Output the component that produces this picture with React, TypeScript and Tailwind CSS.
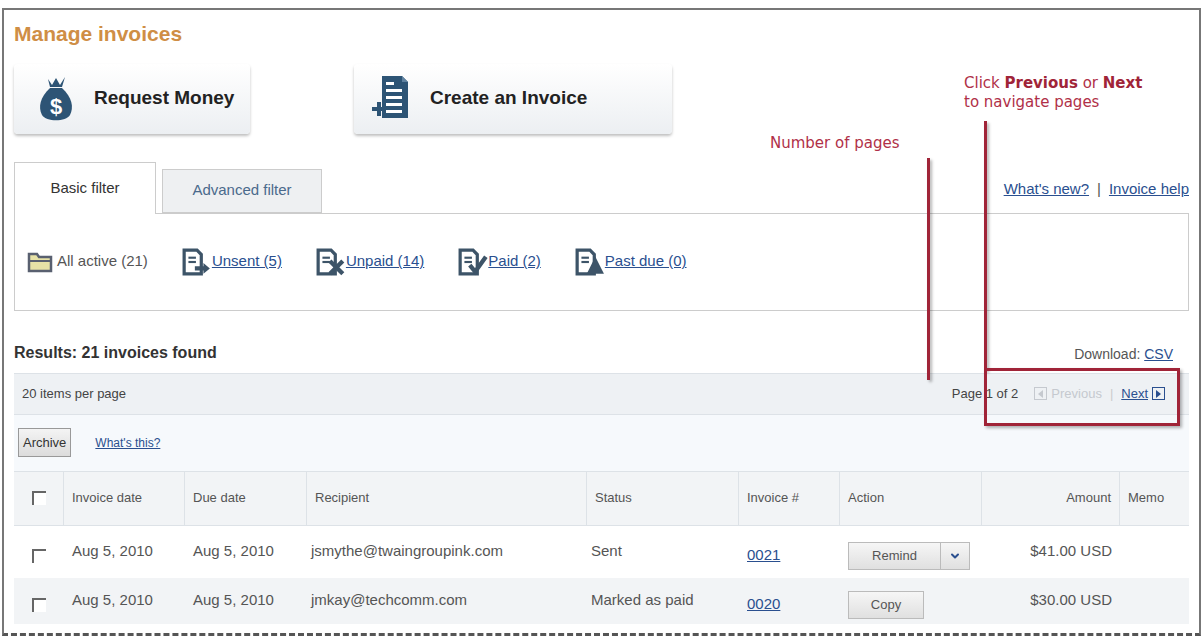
import { ChevronDown } from 'lucide-react';

const link = 'text-[#2a4f8f] underline';

function MoneyIcon() {
  return (
    <svg width="36" height="48" viewBox="0 0 36 48">
      <path d="M10 4 L14 10 L18 3 L22 10 L27 2 L24 12 L12 12 Z" fill="#2d5475" />
      <path d="M12 13 C2 22 0 32 4 40 C8 47 28 47 32 40 C36 32 34 22 24 13 Z" fill="#2d5475" />
      <text x="18" y="39" textAnchor="middle" fontSize="22" fontWeight="bold" fill="#fff" fontFamily="Liberation Sans">$</text>
    </svg>
  );
}

function InvoiceIcon() {
  return (
    <svg width="40" height="50" viewBox="0 0 40 50">
      <path d="M12 2 H32 L38 8 V44 H12 Z" fill="#2d5475" />
      <path d="M32 2 V8 H38" fill="#5f82a0" />
      <rect x="16" y="8" width="8" height="3" fill="#fff" />
      <rect x="16" y="15" width="16" height="3" fill="#fff" />
      <rect x="16" y="22" width="16" height="3" fill="#fff" />
      <rect x="16" y="29" width="16" height="3" fill="#fff" />
      <rect x="16" y="36" width="16" height="3" fill="#fff" />
      <rect x="2" y="33" width="14" height="4" fill="#2d5475" />
      <rect x="7" y="28" width="4" height="14" fill="#2d5475" />
    </svg>
  );
}

function DocIcon({ mark }: { mark: 'arrow' | 'x' | 'check' | 'warn' }) {
  return (
    <svg width="30" height="28" viewBox="0 0 28 26">
      <path d="M2 2 H14 L18 6 V24 H2 Z" fill="none" stroke="#3d5468" strokeWidth="3" />
      <rect x="6" y="8" width="7" height="2" fill="#3d5468" />
      <rect x="6" y="12" width="7" height="2" fill="#3d5468" />
      {mark === 'arrow' && <path d="M12 17 H20 V14 L26 19 L20 24 V21 H12 Z" fill="#3d5468" />}
      {mark === 'x' && <path d="M13 12 L25 24 M25 12 L13 24" stroke="#3d5468" strokeWidth="4" />}
      {mark === 'check' && <path d="M11 16 L16 22 L26 8" stroke="#3d5468" strokeWidth="4" fill="none" />}
      {mark === 'warn' && <path d="M19 8 L27 24 H11 Z" fill="#3d5468" />}
    </svg>
  );
}

function Folder() {
  return (
    <svg width="26" height="22" viewBox="0 0 26 22">
      <path d="M2 3 H10 L12 6 H24 V20 H2 Z" fill="#e7e2a6" stroke="#596070" strokeWidth="2.5" />
      <path d="M2 10 H24" stroke="#596070" strokeWidth="2" />
    </svg>
  );
}

function Tri({ dir, color }: { dir: 'l' | 'r'; color: string }) {
  return (
    <span className="inline-flex h-[13px] w-[13px] items-center justify-center border" style={{ borderColor: color }}>
      <svg width="7" height="8" viewBox="0 0 7 8">
        <path d={dir === 'r' ? 'M1 0 L6 4 L1 8 Z' : 'M6 0 L1 4 L6 8 Z'} fill={color} />
      </svg>
    </span>
  );
}

function Check() {
  return <span className="inline-block h-[14px] w-[14px] border-l-2 border-t-2 border-[#666] bg-white" />;
}

const cols = 'grid grid-cols-[50px_121px_122px_280px_152px_101px_142px_138px_1fr]';
const sans = { fontFamily: '"Liberation Sans", Arial, sans-serif' };
const anno = { fontFamily: '"DejaVu Sans", Verdana, sans-serif' };

export default function App() {
  return (
    <div className="relative h-[640px] w-[1203px] bg-white pt-2 text-[14px] text-[#333]" style={sans}>
      <div className="mx-[2px] h-[628px] border-x-2 border-t-2 border-[#777] px-[10px] pt-2" style={{ borderBottom: '3px dashed #555' }}>
        <h1 className="text-[21px] font-bold text-[#cf8e45]">Manage invoices</h1>
        <div className="mt-[14px] flex gap-[104px]">
          <button className="flex h-[70px] w-[236px] items-center gap-5 rounded bg-gradient-to-b from-white to-[#eceff2] pl-6 shadow-[0_2px_3px_rgba(0,0,0,0.25)]">
            <MoneyIcon />
            <span className="text-[19px] font-bold text-[#222]">Request Money</span>
          </button>
          <button className="flex h-[70px] w-[318px] items-center gap-5 rounded bg-gradient-to-b from-white to-[#eceff2] pl-4 shadow-[0_2px_3px_rgba(0,0,0,0.25)]">
            <InvoiceIcon />
            <span className="text-[19px] font-bold text-[#222]">Create an Invoice</span>
          </button>
        </div>
        <div className="mt-7 flex items-end">
          <div className="relative z-10 -mb-px flex h-[52px] w-[142px] items-center justify-center border border-b-0 border-[#ccc] bg-white text-[15px] text-[#333]">Basic filter</div>
          <div className="ml-[6px] flex h-[44px] w-[160px] items-center justify-center border border-[#ccc] bg-[#eef0f2] text-[15px] text-[#4a6a8c]">Advanced filter</div>
          <div className="mb-3 ml-auto flex items-center gap-2 text-[15px]">
            <span className={link}>What's new?</span>
            <span className="text-[#555]">|</span>
            <span className={link}>Invoice help</span>
          </div>
        </div>
        <div className="flex h-[98px] items-center gap-[34px] border border-[#ccc] pl-3 text-[15px]">
          <span className="flex items-center gap-1 text-[#555]"><Folder />All active (21)</span>
          <span className="flex items-center"><DocIcon mark="arrow" /><span className={link}>Unsent (5)</span></span>
          <span className="flex items-center"><DocIcon mark="x" /><span className={link}>Unpaid (14)</span></span>
          <span className="flex items-center"><DocIcon mark="check" /><span className={link}>Paid (2)</span></span>
          <span className="flex items-center"><DocIcon mark="warn" /><span className={link}>Past due (0)</span></span>
        </div>
        <div className="mt-[30px] flex items-end justify-between pr-4">
          <span className="text-[16px] font-bold text-[#333]">Results: 21 invoices found</span>
          <span className="text-[14px] text-[#555]">Download: <span className={link}>CSV</span></span>
        </div>
        <div className="mt-2 flex h-[42px] items-center justify-between border-y border-[#dde2e7] bg-[#eef1f4] pl-2 pr-6 text-[13px] text-[#444]">
          <span>20 items per page</span>
          <div className="flex items-center gap-2">
            <span>Page 1 of 2</span>
            <span className="ml-2 flex items-center gap-1 text-[#c5c9cf]"><Tri dir="l" color="#c5c9cf" />Previous</span>
            <span className="text-[#ccc]">|</span>
            <span className="flex items-center gap-1"><span className={link}>Next</span><Tri dir="r" color="#2a4f8f" /></span>
          </div>
        </div>
        <div className="flex h-[56px] items-center gap-6 bg-[#f6f9fc] pl-1">
          <span className="border border-[#999] bg-gradient-to-b from-[#f4f4f4] to-[#dcdcdc] px-1 py-1 text-[13px]">Archive</span>
          <span className={`${link} text-[12px]`}>What's this?</span>
        </div>
        <div className={`${cols} h-[55px] border-y border-[#dde2e7] bg-[#f2f4f6] text-[13px] text-[#555]`}>
          <div className="flex items-center justify-center border-r border-[#dde2e7]"><Check /></div>
          <div className="flex items-center border-r border-[#dde2e7] pl-2">Invoice date</div>
          <div className="flex items-center border-r border-[#dde2e7] pl-2">Due date</div>
          <div className="flex items-center border-r border-[#dde2e7] pl-2">Recipient</div>
          <div className="flex items-center border-r border-[#dde2e7] pl-2">Status</div>
          <div className="flex items-center border-r border-[#dde2e7] pl-2">Invoice #</div>
          <div className="flex items-center border-r border-[#dde2e7] pl-2">Action</div>
          <div className="flex items-center justify-end border-r border-[#dde2e7] pr-2">Amount</div>
          <div className="flex items-center pl-2">Memo</div>
        </div>
        <div className={`${cols} h-[52px] text-[15px] text-[#555]`}>
          <div className="flex items-center justify-center pt-2"><Check /></div>
          <div className="flex items-center pl-2">Aug 5, 2010</div>
          <div className="flex items-center pl-2">Aug 5, 2010</div>
          <div className="flex items-center pl-1">jsmythe@twaingroupink.com</div>
          <div className="flex items-center pl-1">Sent</div>
          <div className="flex items-center pl-2 pt-2"><span className={link}>0021</span></div>
          <div className="flex items-center pl-2 pt-2">
            <span className="flex h-[28px] border border-[#bbb] bg-gradient-to-b from-[#f6f6f6] to-[#e0e0e0] text-[13px]">
              <span className="flex w-[92px] items-center justify-center border-r border-[#bbb]">Remind</span>
              <span className="flex w-[28px] items-center justify-center"><ChevronDown size={12} strokeWidth={4} className="text-[#2a4f8f]" /></span>
            </span>
          </div>
          <div className="flex items-center justify-end pr-2">$41.00 USD</div>
          <div />
        </div>
        <div className={`${cols} h-[46px] bg-[#f2f4f6] text-[15px] text-[#555]`}>
          <div className="flex items-center justify-center pt-2"><Check /></div>
          <div className="flex items-center pl-2">Aug 5, 2010</div>
          <div className="flex items-center pl-2">Aug 5, 2010</div>
          <div className="flex items-center pl-1">jmkay@techcomm.com</div>
          <div className="flex items-center pl-1">Marked as paid</div>
          <div className="flex items-center pl-2 pt-2"><span className={link}>0020</span></div>
          <div className="flex items-center pl-2 pt-2">
            <span className="flex h-[28px] w-[76px] items-center justify-center border border-[#bbb] bg-gradient-to-b from-[#f6f6f6] to-[#e0e0e0] text-[13px]">Copy</span>
          </div>
          <div className="flex items-center justify-end pr-2">$30.00 USD</div>
          <div />
        </div>
      </div>

      {/* annotations */}
      <div className="absolute left-[770px] top-[132px] text-[15px] text-[#b03048]" style={anno}>Number of pages</div>
      <div className="absolute left-[927px] top-[158px] h-[222px] w-[3px] bg-[#a02438] shadow-[2px_2px_3px_rgba(0,0,0,0.3)]" />
      <div className="absolute left-[964px] top-[74px] text-[15px] leading-[19px] text-[#b03048]" style={anno}>
        Click <b className="text-[#a02438]">Previous</b> or <b className="text-[#a02438]">Next</b>
        <br />to navigate pages
      </div>
      <div className="absolute left-[984px] top-[121px] h-[250px] w-[3px] bg-[#a02438] shadow-[2px_2px_3px_rgba(0,0,0,0.3)]" />
      <div className="absolute left-[984px] top-[368px] h-[58px] w-[196px] border-[3px] border-[#a02438] shadow-[2px_2px_3px_rgba(0,0,0,0.3)]" />
    </div>
  );
}
